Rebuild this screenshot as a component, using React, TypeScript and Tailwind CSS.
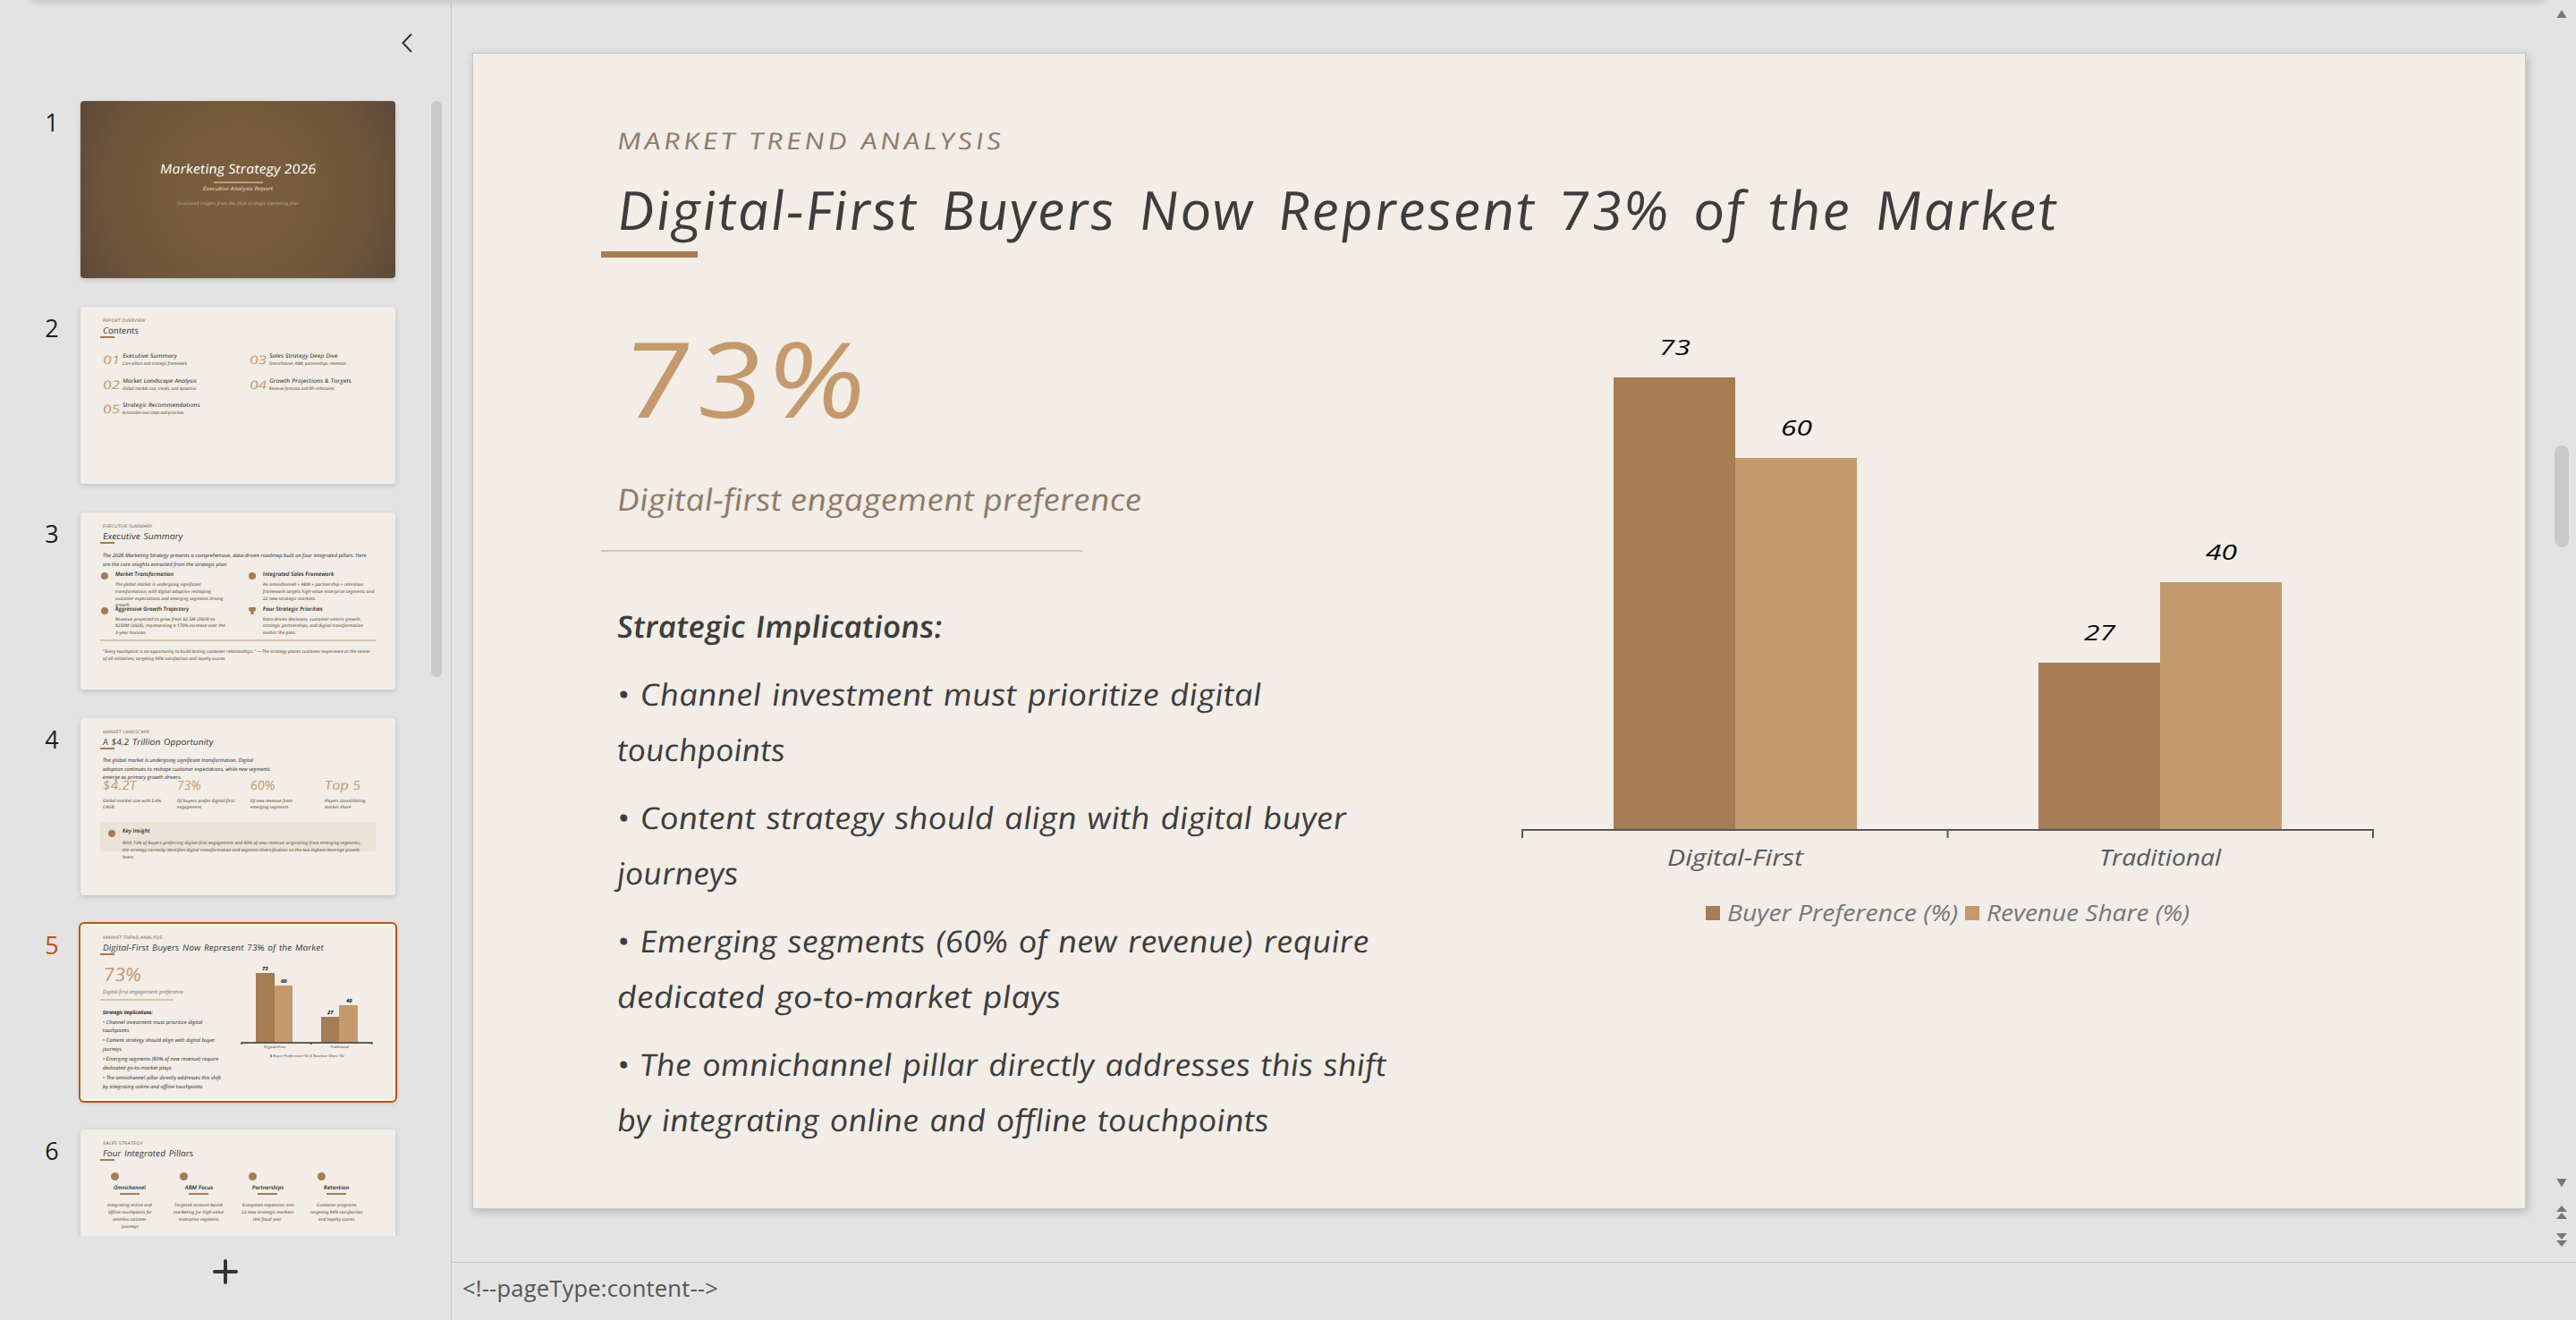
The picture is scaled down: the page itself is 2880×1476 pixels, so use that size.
import { useLayoutEffect, useRef, useState, type ReactNode } from 'react';

type InkProps = { w: number; className?: string; children: string };

// One line of slide text, stretched sideways until it is `w` pixels wide.
function Ink({ w, className = '', children }: InkProps) {
  const ref = useRef<HTMLSpanElement>(null);
  const [stretch, setStretch] = useState(1);

  useLayoutEffect(() => {
    if (ref.current) setStretch(w / ref.current.offsetWidth);
  }, [w, children]);

  return (
    <div className={`whitespace-nowrap ${className}`}>
      <span className="inline-block align-top" style={{ width: w }}>
        <span
          ref={ref}
          className="inline-block origin-[0_60%] align-top"
          style={{ transform: `scaleX(${stretch}) skewX(5deg)` }}
        >
          {children}
        </span>
      </span>
    </div>
  );
}

type Line = [text: string, width: number];

function Lines({ lines, className = '' }: { lines: Line[]; className?: string }) {
  return (
    <div className={className}>
      {lines.map(([text, w]) => (
        <Ink key={text} w={w}>
          {text}
        </Ink>
      ))}
    </div>
  );
}

function ThumbHeader({ eyebrow, title }: { eyebrow: Line; title: Line }) {
  return (
    <div className="pt-[10px] pl-[22px]">
      <Ink w={eyebrow[1]} className="h-[10px] pl-[3px] text-[4.8px] leading-[10px] text-[#7d6a58]">
        {eyebrow[0]}
      </Ink>
      <Ink w={title[1]} className="h-[14px] pl-[3px] text-[9.5px] leading-[14px] [word-spacing:1px] text-[#3a3a3a]">
        {title[0]}
      </Ink>
      <div className="-mt-px h-[2px] w-4 bg-[#a67c52]" />
    </div>
  );
}

function CoverThumb() {
  return (
    <div className="flex h-full flex-col items-center bg-[radial-gradient(circle_at_center,#7e5e3f_0%,#735a3b_48%,#6c533b_76%,#5c4938_100%)] pt-[65px]">
      <Ink w={174} className="text-[14.5px] leading-[22px] text-white">
        Marketing Strategy 2026
      </Ink>
      <div className="mt-[3px] h-[2px] w-[55px] bg-[#c49a6c]" />
      <Ink w={78} className="mt-px text-[6px] leading-[10px] text-[#e6dccf]">
        Executive Analysis Report
      </Ink>
      <Ink w={136} className="mt-[6px] text-[4.8px] leading-[10px] text-[#c4b39d]">
        Structured insights from the 2026 strategic marketing plan
      </Ink>
    </div>
  );
}

const contents: { num: string; title: Line; desc: Line }[][] = [
  [
    { num: '01', title: ['Executive Summary', 61], desc: ['Core pillars and strategic framework', 72] },
    { num: '02', title: ['Market Landscape Analysis', 83], desc: ['Global market size, trends, and dynamics', 82] },
    { num: '05', title: ['Strategic Recommendations', 86], desc: ['Actionable next steps and priorities', 69] }
  ],
  [
    { num: '03', title: ['Sales Strategy Deep Dive', 77], desc: ['Omnichannel, ABM, partnerships, retention', 86] },
    { num: '04', title: ['Growth Projections & Targets', 92], desc: ['Revenue forecasts and KPI milestones', 73] }
  ]
];

function ContentsThumb() {
  return (
    <>
      <ThumbHeader eyebrow={['REPORT OVERVIEW', 48]} title={['Contents', 40]} />
      <div className="mt-[15px] flex pl-[25px]">
        {contents.map((column) => (
          <div key={column[0].num} className="w-[165px]">
            {column.map((item) => (
              <div key={item.num} className="flex h-[27.5px]">
                <Ink w={19} className="w-[22px] pt-px text-[13px] leading-[16px] text-[#c49a6c]">
                  {item.num}
                </Ink>
                <div>
                  <Ink w={item.title[1]} className="text-[6.3px] leading-[9px] font-medium text-[#222]">
                    {item.title[0]}
                  </Ink>
                  <Ink w={item.desc[1]} className="text-[4.8px] leading-[8px] font-semibold text-[#7a6755]">
                    {item.desc[0]}
                  </Ink>
                </div>
              </div>
            ))}
          </div>
        ))}
      </div>
    </>
  );
}

type Insight = { title: Line; lines: Line[]; icon?: ReactNode };

const dot = <div className="size-2 rounded-full bg-[#a67c52]" />;

const trophy = (
  <svg viewBox="0 0 8 8" className="size-2" fill="#a67c52">
    <path d="M1 0h6l1 1v2L7 4.500H5.700V8H2.300V4.500H1L0 3V1z" />
  </svg>
);

const insights: Insight[] = [
  {
    title: ['Market Transformation', 65],
    lines: [
      ['The global market is undergoing significant', 96],
      ['transformation, with digital adoption reshaping', 107],
      ['customer expectations and emerging segments driving', 121],
      ['growth.', 17]
    ]
  },
  {
    title: ['Integrated Sales Framework', 79],
    lines: [
      ['An omnichannel + ABM + partnership + retention', 112],
      ['framework targets high-value enterprise segments and', 124],
      ['22 new strategic markets.', 59]
    ]
  },
  {
    title: ['Aggressive Growth Trajectory', 82],
    lines: [
      ['Revenue projected to grow from $2.5M (2024) to', 111],
      ['$250M (2026), representing a 170% increase over the', 123],
      ['3-year horizon.', 35]
    ]
  },
  {
    title: ['Four Strategic Priorities', 67],
    icon: trophy,
    lines: [
      ['Data-driven decisions, customer-centric growth,', 110],
      ['strategic partnerships, and digital transformation', 112],
      ['anchor the plan.', 37]
    ]
  }
];

function SummaryThumb() {
  return (
    <>
      <ThumbHeader eyebrow={['EXECUTIVE SUMMARY', 55]} title={['Executive Summary', 89]} />
      <Lines
        className="mt-[8px] h-[20px] pl-[25px] text-[5.8px] leading-[10px] font-medium text-[#222]"
        lines={[
          ['The 2026 Marketing Strategy presents a comprehensive, data-driven roadmap built on four integrated pillars. Here', 295],
          ['are the core insights extracted from the strategic plan.', 139]
        ]}
      />
      <div className="mt-px grid grid-cols-[165px_165px] grid-rows-[38.5px_39.5px] pl-[23px]">
        {insights.map((item) => (
          <div key={item.title[0]} className="flex">
            <div className="w-[15.5px] pt-[3px]">{item.icon ?? dot}</div>
            <div>
              <Ink w={item.title[1]} className="text-[6.2px] leading-[10px] font-semibold text-[#222]">
                {item.title[0]}
              </Ink>
              <Lines lines={item.lines} className="mt-[3px] text-[4.8px] leading-[7.8px] font-semibold text-[#7a6755]" />
            </div>
          </div>
        ))}
      </div>
      <div className="ml-[22px] h-[2px] w-[308px] bg-[#d5c4ac]" />
      <Lines
        className="mt-[7px] pl-[25px] text-[4.8px] leading-[8px] font-semibold text-[#7a6755]"
        lines={[
          ['"Every touchpoint is an opportunity to build lasting customer relationships." — The strategy places customer experience at the center', 299],
          ['of all initiatives, targeting 94% satisfaction and loyalty scores.', 138]
        ]}
      />
    </>
  );
}

const stats: { value: Line; lines: Line[] }[] = [
  { value: ['$4.2T', 38], lines: [['Global market size with 5.6%', 65], ['CAGR', 13]] },
  { value: ['73%', 27], lines: [['Of buyers prefer digital-first', 64], ['engagement', 27]] },
  { value: ['60%', 28], lines: [['Of new revenue from', 47], ['emerging segments', 43]] },
  { value: ['Top 5', 40], lines: [['Players consolidating', 46], ['market share', 29]] }
];

function LandscapeThumb() {
  return (
    <>
      <ThumbHeader eyebrow={['MARKET LANDSCAPE', 52]} title={['A $4.2 Trillion Opportunity', 124]} />
      <Lines
        className="mt-[8px] h-[22px] pl-[25px] text-[5.8px] leading-[9.7px] font-medium text-[#222]"
        lines={[
          ['The global market is undergoing significant transformation. Digital', 168],
          ['adoption continues to reshape customer expectations, while new segments', 187],
          ['emerge as primary growth drivers.', 88]
        ]}
      />
      <div className="grid grid-cols-[82.5px_82.5px_82.5px_70px] pl-[25px]">
        {stats.map((stat) => (
          <div key={stat.value[0]}>
            <Ink w={stat.value[1]} className="text-[14px] leading-[20px] text-[#c49a6c]">
              {stat.value[0]}
            </Ink>
            <Lines lines={stat.lines} className="mt-[4px] text-[4.8px] leading-[7px] font-semibold text-[#7a6755]" />
          </div>
        ))}
      </div>
      <div className="mt-[13px] ml-[22px] flex h-[33px] w-[308px] bg-[#e9e3d8] pl-[9px]">
        <div className="w-[16px] pt-[9px]">{dot}</div>
        <div className="pt-[5px]">
          <Ink w={31} className="text-[6.2px] leading-[10px] font-semibold text-[#222]">
            Key Insight
          </Ink>
          <Lines
            className="mt-[4px] text-[4.8px] leading-[8px] font-semibold text-[#7a6755]"
            lines={[
              ['With 73% of buyers preferring digital-first engagement and 60% of new revenue originating from emerging segments,', 266],
              ['the strategy correctly identifies digital transformation and segment diversification as the two highest-leverage growth', 265],
              ['levers.', 13]
            ]}
          />
        </div>
      </div>
    </>
  );
}

function TrendThumb() {
  return (
    <>
      <ThumbHeader eyebrow={['MARKET TREND ANALYSIS', 66]} title={['Digital-First Buyers Now Represent 73% of the Market', 247]} />
      <div className="flex pl-[22px]">
        <div className="w-[148px]">
          <Ink w={42} className="mt-[8px] pl-[4px] text-[20.5px] leading-[26px] text-[#c49a6c]">
            73%
          </Ink>
          <Ink w={90} className="mt-[2px] pl-[3px] text-[5.8px] leading-[10px] font-medium text-[#7a6755]">
            Digital-first engagement preference
          </Ink>
          <div className="mt-[3px] h-[2px] w-[82px] bg-[#d5c4ac]" />
          <Ink w={56} className="mt-[7.5px] pl-[3px] text-[5.8px] leading-[10px] font-bold text-[#222]">
            Strategic Implications:
          </Ink>
          <div className="mt-[2px] flex flex-col gap-[2.4px] pl-[3px] text-[5.8px] leading-[9.3px] font-medium text-[#222]">
            <Lines lines={[['• Channel investment must prioritize digital', 111], ['touchpoints', 29]]} />
            <Lines lines={[['• Content strategy should align with digital buyer', 125], ['journeys', 21]]} />
            <Lines lines={[['• Emerging segments (60% of new revenue) require', 129], ['dedicated go-to-market plays', 77]]} />
            <Lines lines={[['• The omnichannel pillar directly addresses this shift', 132], ['by integrating online and offline touchpoints', 112]]} />
          </div>
        </div>
        <svg viewBox="170 40 170 120" className="mt-[5px] h-[120px] w-[170px]">
          <path d="M196 55h21v77h-21zM269 104h20v28h-20z" fill="#a67c52" />
          <path d="M217 69h20v63h-20zM289 91h21v41h-21z" fill="#c49a6c" />
          <path d="M179.3 132H326.7v3h-2v-1H259v1h-2v-1H181.3v1h-2z" fill="#5b5b5e" />
          <g fontSize="4.5" fontWeight="700">
            <text x="203" y="52" textLength="6.5" lengthAdjust="spacingAndGlyphs">73</text>
            <text x="224" y="65.5" textLength="6.5" lengthAdjust="spacingAndGlyphs">60</text>
            <text x="276" y="100.5" textLength="6.5" lengthAdjust="spacingAndGlyphs">27</text>
            <text x="297" y="87.5" textLength="6.5" lengthAdjust="spacingAndGlyphs">40</text>
          </g>
          <g fontSize="4.3" fontWeight="500" fill="#444">
            <text x="205" y="139.3" textLength="24" lengthAdjust="spacingAndGlyphs">Digital-First</text>
            <text x="279" y="139.3" textLength="21" lengthAdjust="spacingAndGlyphs">Traditional</text>
            <text x="215" y="149.3" textLength="40" lengthAdjust="spacingAndGlyphs">Buyer Preference (%)</text>
            <text x="260" y="149.3" textLength="35" lengthAdjust="spacingAndGlyphs">Revenue Share (%)</text>
          </g>
          <path d="M212 146.3h2v3h-2z" fill="#a67c52" />
          <path d="M256.5 146.3h2v3h-2z" fill="#c49a6c" />
        </svg>
      </div>
    </>
  );
}

const pillars: { title: Line; lines: Line[] }[] = [
  {
    title: ['Omnichannel', 36],
    lines: [['Integrating online and', 50], ['offline touchpoints for', 49], ['seamless customer', 38], ['journeys', 19]]
  },
  {
    title: ['ABM Focus', 31],
    lines: [['Targeted account-based', 54], ['marketing for high-value', 56], ['enterprise segments', 44]]
  },
  {
    title: ['Partnerships', 35],
    lines: [['Ecosystem expansion into', 57], ['22 new strategic markets', 58], ['this fiscal year', 32]]
  },
  {
    title: ['Retention', 28],
    lines: [['Customer programs', 45], ['targeting 94% satisfaction', 58], ['and loyalty scores', 40]]
  }
];

function PillarsThumb() {
  return (
    <>
      <ThumbHeader eyebrow={['SALES STRATEGY', 44]} title={['Four Integrated Pillars', 101]} />
      <div className="mt-[13px] flex pl-[16.5px]">
        {pillars.map((pillar) => (
          <div key={pillar.title[0]} className="flex w-[77px] flex-col items-center">
            <div className="mr-[33px] size-[9px] rounded-full bg-[#a67c52]" />
            <Ink w={pillar.title[1]} className="mt-[3px] text-[6.2px] leading-[10px] font-semibold text-[#222]">
              {pillar.title[0]}
            </Ink>
            <div className="mt-px h-[2px] w-[22px] bg-[#a67c52]" />
            <div className="mt-[7px] flex flex-col items-center text-[4.8px] leading-[8px] font-semibold text-[#7a6755]">
              {pillar.lines.map(([text, w]) => (
                <Ink key={text} w={w}>
                  {text}
                </Ink>
              ))}
            </div>
          </div>
        ))}
      </div>
    </>
  );
}

const thumbs = [CoverThumb, ContentsThumb, SummaryThumb, LandscapeThumb, TrendThumb, PillarsThumb];
const current = 4;

function Sidebar() {
  return (
    <aside className="flex w-[504px] shrink-0 flex-col">
      <div className="flex h-[113px] justify-end pt-[37px] pr-[43px]">
        <svg viewBox="0 0 12 22" className="h-[22px] w-[12px]" fill="none" stroke="#333" strokeWidth="2">
          <path d="M11 1 1.5 11 11 21" />
        </svg>
      </div>
      <div className="-mt-2 flex h-[1277px] overflow-hidden pt-2">
        <div className="flex w-[482px] shrink-0 flex-col gap-8">
          {thumbs.map((Thumb, i) => (
            <div key={i} className="flex shrink-0">
              <div
                className={
                  i === current
                    ? "mr-[20px] ml-[46px] w-6 text-center font-['Open_Sans',sans-serif] text-[27px] leading-[48px] text-[#c4510f]"
                    : "mr-[20px] ml-[46px] w-6 text-center font-['Open_Sans',sans-serif] text-[27px] leading-[48px] text-[#1f1f1f]"
                }
              >
                {i + 1}
              </div>
              <div className="relative h-[198px] w-[352px] rounded-[4px] shadow-[0_2px_6px_rgba(0,0,0,0.16)]">
                <div className="h-full overflow-hidden rounded-[4px] bg-[#f2ede6] font-['Open_Sans',sans-serif] italic">
                  <Thumb />
                </div>
                {i === current && (
                  <div className="absolute -inset-[2px] rounded-[6px] border-2 border-[#c4510f] shadow-[inset_0_0_0_2px_#fff]" />
                )}
              </div>
            </div>
          ))}
        </div>
        <div className="h-[644px] w-3 rounded-full bg-[#c9c9c9]" />
      </div>
      <div className="flex justify-center pt-[26px]">
        <svg viewBox="0 0 28 28" className="size-7" stroke="#333" strokeWidth="4" strokeLinecap="round">
          <path d="M14 2v24M2 14h24" />
        </svg>
      </div>
    </aside>
  );
}

function BarChart() {
  const base = 928;
  const unit = 6.93;
  const bars = [
    { x: 1804, value: 73, fill: '#a67c52' },
    { x: 1940, value: 60, fill: '#c49a6c' },
    { x: 2279, value: 27, fill: '#a67c52' },
    { x: 2415, value: 40, fill: '#c49a6c' }
  ];

  return (
    <svg viewBox="1680 360 1000 700" className="mt-[72px] h-[700px] w-[1000px]">
      {bars.map((bar) => (
        <g key={bar.value}>
          <rect x={bar.x} y={Math.round(base - bar.value * unit)} width="136" height={Math.round(bar.value * unit)} fill={bar.fill} />
          <text
            x={bar.x + 51}
            y={base - bar.value * unit - 25}
            textLength="35"
            lengthAdjust="spacingAndGlyphs"
            fontSize="23"
            fill="#000"
          >
            {bar.value}
          </text>
        </g>
      ))}
      <path d="M1702 937V928H2653V937M2177.5 928V937" fill="none" stroke="#55575b" strokeWidth="2" />
      <g fontSize="25" fill="#585a5e">
        <text x="1864" y="968" textLength="152" lengthAdjust="spacingAndGlyphs">Digital-First</text>
        <text x="2347" y="968" textLength="136" lengthAdjust="spacingAndGlyphs">Traditional</text>
      </g>
      <rect x="1907" y="1013" width="16" height="16" fill="#a67c52" />
      <rect x="2197" y="1013" width="16" height="16" fill="#c49a6c" />
      <g fontSize="25" fill="#75777b">
        <text x="1931" y="1030" textLength="258" lengthAdjust="spacingAndGlyphs">Buyer Preference (%)</text>
        <text x="2221" y="1030" textLength="227" lengthAdjust="spacingAndGlyphs">Revenue Share (%)</text>
      </g>
    </svg>
  );
}

const implications: Line[][] = [
  [['• Channel investment must prioritize digital', 721], ['touchpoints', 188]],
  [['• Content strategy should align with digital buyer', 815], ['journeys', 136]],
  [['• Emerging segments (60% of new revenue) require', 841], ['dedicated go-to-market plays', 496]],
  [['• The omnichannel pillar directly addresses this shift', 860], ['by integrating online and offline touchpoints', 729]]
];

function Slide() {
  return (
    <section className="h-[1293px] w-[2296px] shrink-0 border border-[#c8c6c4] bg-[#f2ede6] pt-[77px] pl-[143px] font-['Open_Sans',sans-serif] italic shadow-[2px_3px_10px_rgba(0,0,0,0.2)]">
      <Ink w={433} className="h-[40px] pl-[18px] text-[26px] leading-[40px] tracking-[3px] text-[#8e7b69]">
        MARKET TREND ANALYSIS
      </Ink>
      <Ink w={1611} className="mt-[21px] h-[72px] pl-[18px] text-[60px] leading-[72px] tracking-[1.5px] [word-spacing:8px] text-[#3d3d3d]">
        Digital-First Buyers Now Represent 73% of the Market
      </Ink>
      <div className="mt-[11px] h-[7px] w-[108px] bg-[#a67c52]" />
      <div className="flex">
        <div className="w-[1008px] shrink-0">
          <Ink w={274} className="mt-[74px] h-[120px] pl-[26px] text-[117px] leading-[120px] font-medium tracking-[4px] text-[#c49a6c]">
            73%
          </Ink>
          <Ink w={587} className="mt-[56px] h-[40px] pl-[18px] text-[34px] leading-[40px] text-[#8e7b69]">
            Digital-first engagement preference
          </Ink>
          <div className="mt-[37px] h-[2px] w-[538px] bg-[#d4c5b2]" />
          <div className="mt-[52px] flex flex-col gap-[14px] pl-[18px] text-[34px] leading-[62px] [word-spacing:2px] text-[#3d3d3d]">
            <Ink w={364} className="font-semibold">
              Strategic Implications:
            </Ink>
            {implications.map((lines) => (
              <Lines key={lines[0][0]} lines={lines} />
            ))}
          </div>
        </div>
        <BarChart />
      </div>
    </section>
  );
}

function Scrollbar() {
  return (
    <div className="flex w-4 flex-col items-center">
      <svg viewBox="0 0 12 10" className="mt-[11px] h-[10px] w-3" fill="#777">
        <path d="M6 0 11.5 9H.5z" />
      </svg>
      <div className="mt-[477px] h-[114px] w-4 rounded-full bg-[#c9c9c9]" />
      <svg viewBox="0 0 12 10" className="mt-[706px] h-[10px] w-3" fill="#777">
        <path d="M.5 0h11L6 9.5z" />
      </svg>
      <svg viewBox="0 0 12 15" className="mt-[20px] h-[15px] w-3" fill="#777">
        <path d="m6 0 6 7H0zM6 8l6 7H0z" />
      </svg>
      <svg viewBox="0 0 12 15" className="mt-[16px] h-[15px] w-3" fill="#777">
        <path d="M0 0h12L6 7zM0 8h12l-6 7z" />
      </svg>
    </div>
  );
}

export default function App() {
  return (
    <div className="relative flex h-[1476px] w-[2880px] overflow-hidden bg-[#e3e3e3]">
      <div className="absolute -top-[17px] left-[30px] h-5 w-[2820px] rounded-[10px] bg-[#d0d0d0] shadow-[0_0_8px_rgba(0,0,0,0.12)]" />
      <Sidebar />
      <main className="flex grow flex-col border-l border-[#c6c6c6]">
        <div className="flex h-[1411px]">
          <div className="w-[2351px] pt-[59px] pl-[23px]">
            <Slide />
          </div>
          <Scrollbar />
        </div>
        <div className="grow border-t border-[#c6c6c6] pt-[11px] pl-[12px] font-['Open_Sans',sans-serif] text-[25.5px] leading-[34px] tracking-[0.2px] text-[#555]">
          {'<!--pageType:content-->'}
        </div>
      </main>
    </div>
  );
}
